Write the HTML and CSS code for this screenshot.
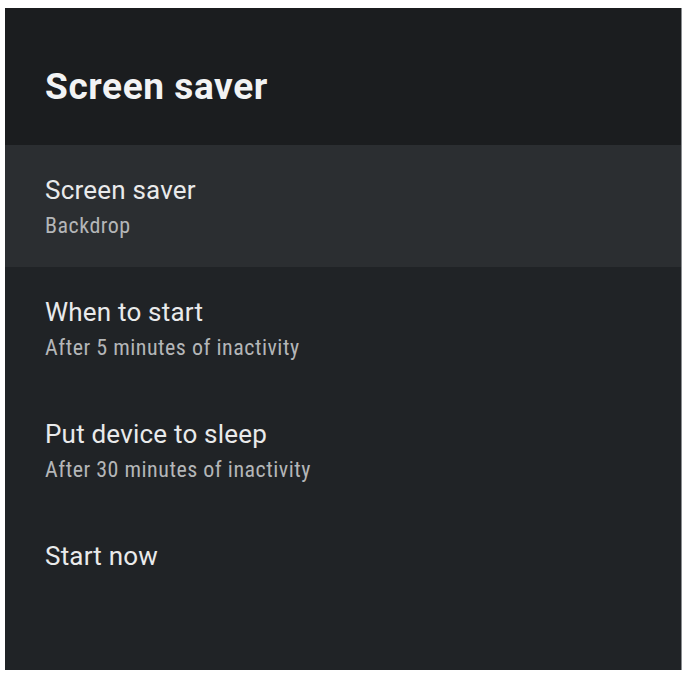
FILE: index.html
```html
<!DOCTYPE html>
<html lang="en">
<head>
    <meta charset="UTF-8">
    <meta name="viewport" content="width=device-width, initial-scale=1.0">
    <title>Screen saver</title>
    <link rel="stylesheet" href="styles.css">
</head>
<body>
    <div class="panel">
        <header class="panel-header">
            <h1>Screen saver</h1>
        </header>

        <ul class="settings">
            <li class="setting focused">
                <div class="setting-title">Screen saver</div>
                <div class="setting-summary">Backdrop</div>
            </li>
            <li class="setting">
                <div class="setting-title">When to start</div>
                <div class="setting-summary">After 5 minutes of inactivity</div>
            </li>
            <li class="setting">
                <div class="setting-title">Put device to sleep</div>
                <div class="setting-summary">After 30 minutes of inactivity</div>
            </li>
            <li class="setting">
                <div class="setting-title">Start now</div>
            </li>
        </ul>
    </div>
</body>
</html>
```

FILE: styles.css
```css
body {
    margin: 0;
    padding: 8px 5px 3px 5px;
    background: #ffffff;
    font-family: Roboto, "Noto Sans", sans-serif;
}

.panel {
    height: 662px;
    background: #202326;
    border-right: 1px solid #8a8d90;
    display: flex;
    flex-direction: column;
}

.panel-header {
    height: 137px;
    background: #1b1d1f;
    padding-left: 40px;
    box-sizing: border-box;
}

.panel-header h1 {
    margin: 0;
    padding-top: 57px;
    font-size: 37px;
    line-height: 44px;
    font-weight: 700;
    letter-spacing: 0.6px;
    color: #f2f3f4;
}

.settings {
    list-style: none;
    margin: 0;
    padding: 0;
}

.setting {
    height: 122px;
    padding: 30px 0 0 40px;
    box-sizing: border-box;
}

.setting.focused {
    background: #2b2e31;
}

.setting-title {
    font-size: 26px;
    line-height: 30px;
    letter-spacing: 0.2px;
    color: #e9eaeb;
}

.setting-summary {
    margin-top: 9px;
    font-family: "Liberation Sans Narrow", "Roboto Condensed", Roboto, sans-serif;
    font-size: 22px;
    line-height: 24px;
    letter-spacing: 0.5px;
    color: #b4b6b8;
}
```
